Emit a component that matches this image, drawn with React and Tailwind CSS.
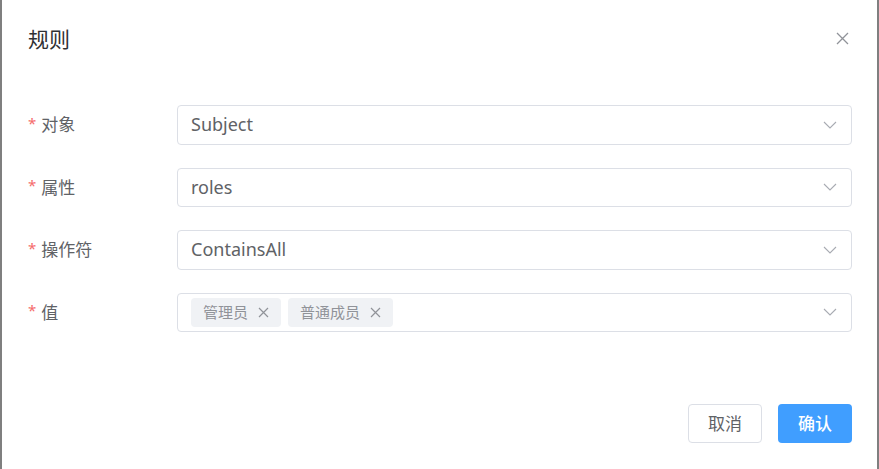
import React from "react";

const font = { fontFamily: '"Noto Sans", "Noto Sans CJK SC", sans-serif' };

function Chevron() {
  return (
    <svg width="14" height="8" viewBox="0 0 14 8" className="shrink-0">
      <path d="M1 1 L7 7 L13 1" fill="none" stroke="#a8abb2" strokeWidth="1.1" />
    </svg>
  );
}

function Tag({ text }) {
  return (
    <div className="flex items-center h-[29px] px-[12px] rounded-[4px] bg-[#f0f2f5] text-[#909399] text-[15px] gap-[10px]">
      <span>{text}</span>
      <svg width="11" height="11" viewBox="0 0 11 11">
        <path d="M1 1 L10 10 M10 1 L1 10" stroke="#909399" strokeWidth="1.2" />
      </svg>
    </div>
  );
}

function Row({ label, children }) {
  return (
    <div className="flex items-center h-[39.5px]">
      <div className="w-[149px] flex items-center text-[17px] text-[#606266]">
        <span className="text-[#f56c6c] mr-[5px] text-[15px] relative -top-[2px]">*</span>
        <span>{label}</span>
      </div>
      <div className="flex-1 h-full flex items-center border border-[#dcdfe6] rounded-[4px] pl-[13px] pr-[14px] bg-white">
        <div className="flex-1 flex items-center gap-[7px] text-[18px] text-[#606266]">{children}</div>
        <Chevron />
      </div>
    </div>
  );
}

export default function App() {
  return (
    <div className="w-[879px] h-[469px] bg-[#7f7f7f] flex overflow-hidden" style={font}>
      <div className="ml-[2px] w-[875px] h-full bg-white flex flex-col">
        <div className="flex items-center justify-between pl-[26px] pr-[28px] pt-[24px] h-[54px]">
          <span className="text-[21px] text-[#303133] leading-[26px]">规则</span>
          <svg width="13" height="13" viewBox="0 0 13 13" className="relative -top-[1px]">
            <path d="M1 1 L12 12 M12 1 L1 12" stroke="#909399" strokeWidth="1.3" />
          </svg>
        </div>
        <div className="flex flex-col gap-[23px] pl-[26px] pr-[25px] mt-[51px]">
          <Row label="对象"><span>Subject</span></Row>
          <Row label="属性"><span>roles</span></Row>
          <Row label="操作符"><span>ContainsAll</span></Row>
          <Row label="值">
            <Tag text="管理员" />
            <Tag text="普通成员" />
          </Row>
        </div>
        <div className="flex justify-end gap-[16px] pr-[25px] mt-[72px]">
          <button className="w-[74px] h-[39px] rounded-[4px] border border-[#dcdfe6] bg-white text-[17px] text-[#606266]">取消</button>
          <button className="w-[74px] h-[39px] rounded-[4px] bg-[#409eff] text-[17px] text-white font-medium">确认</button>
        </div>
      </div>
    </div>
  );
}
